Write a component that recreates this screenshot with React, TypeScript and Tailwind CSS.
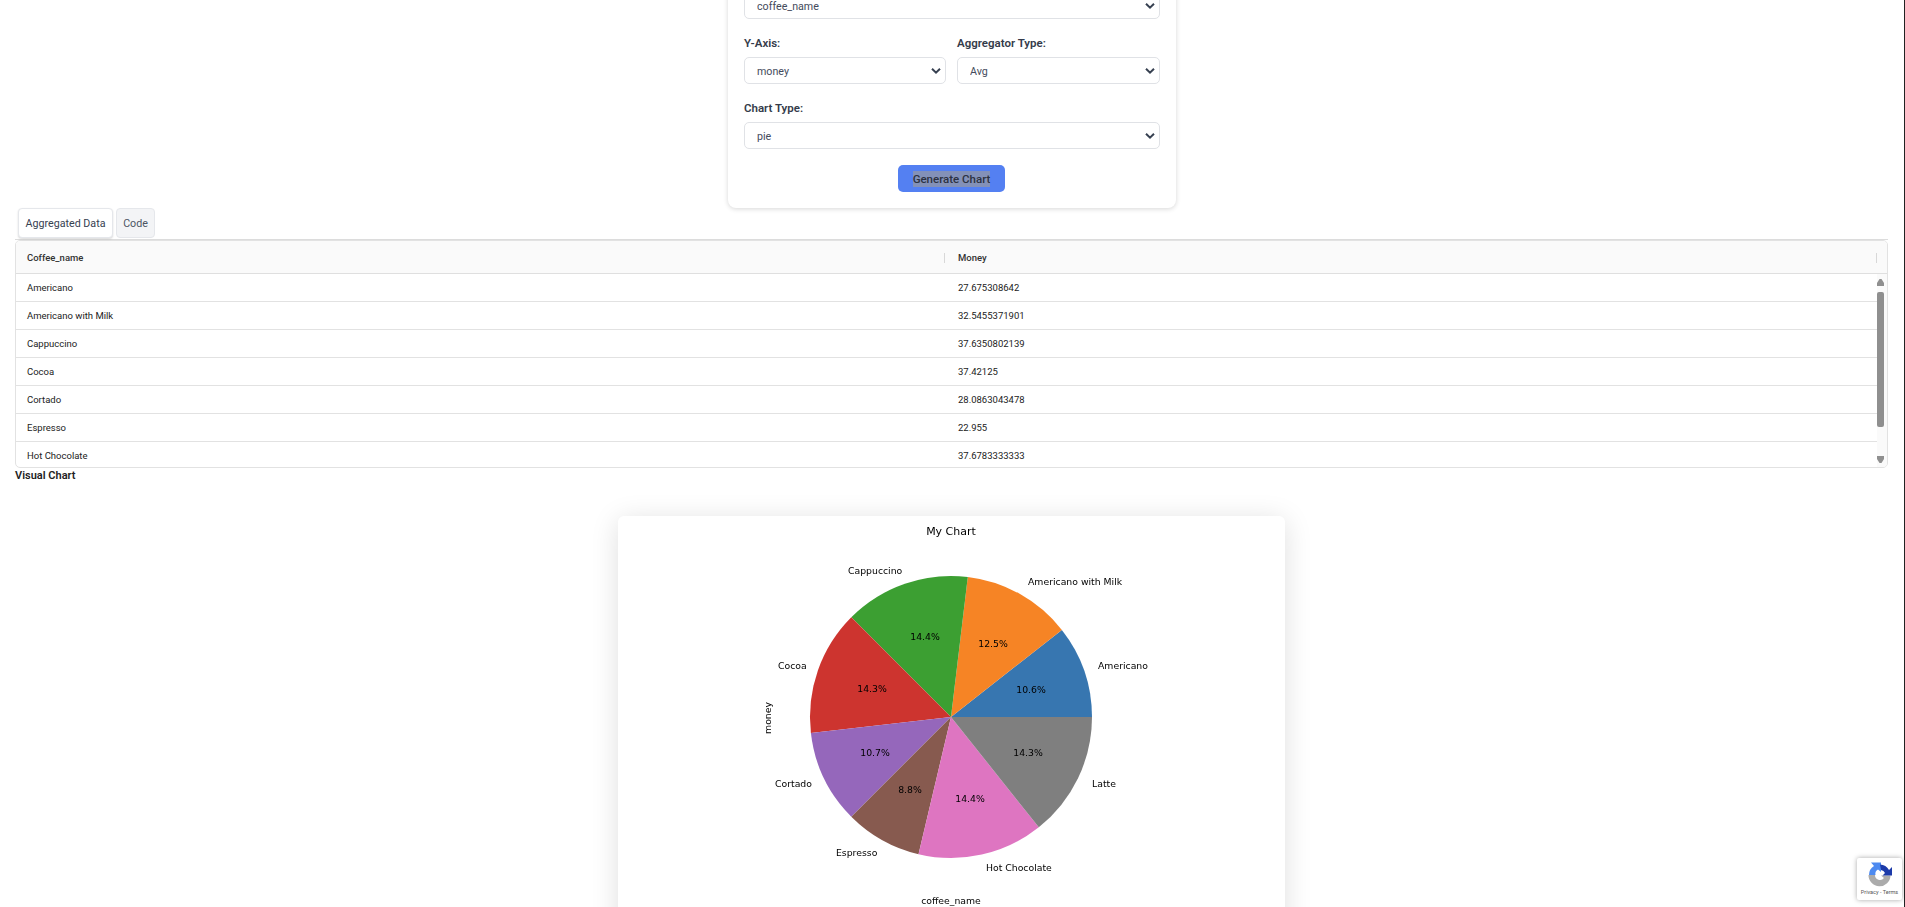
import React from "react";

const font = "font-['Roboto','Noto_Sans',sans-serif]";

function Chevron() {
  return (
    <svg
      className="absolute right-[5px] top-1/2 -translate-y-1/2 pointer-events-none"
      width="10"
      height="7"
      viewBox="0 0 10 7"
      fill="none"
    >
      <path d="M1 1.2 L5 5.2 L9 1.2" stroke="#374151" strokeWidth="2" />
    </svg>
  );
}

function Select({ value }: { value: string }) {
  return (
    <div className="relative w-full">
      <select
        defaultValue={value}
        className="block appearance-none w-full h-[27px] pl-[12px] pt-[3px] bg-white border border-[#e0e2e6] rounded-[5px] text-[10.7px] text-[#444b5c] outline-none"
      >
        <option>{value}</option>
      </select>
      <Chevron />
    </div>
  );
}

function Label({ children }: { children: React.ReactNode }) {
  return <div className="h-4 leading-4 mb-[6px] text-[11.5px] font-semibold text-[#343b4a] whitespace-nowrap">{children}</div>;
}

const rows: [string, string][] = [
  ["Americano", "27.675308642"],
  ["Americano with Milk", "32.5455371901"],
  ["Cappuccino", "37.6350802139"],
  ["Cocoa", "37.42125"],
  ["Cortado", "28.0863043478"],
  ["Espresso", "22.955"],
  ["Hot Chocolate", "37.6783333333"],
];

const slices = [
  { pct: 10.6, color: "#3776b0" },
  { pct: 12.5, color: "#f68425" },
  { pct: 14.4, color: "#3c9f32" },
  { pct: 14.3, color: "#cd342f" },
  { pct: 10.7, color: "#9567bb" },
  { pct: 8.8, color: "#875a4f" },
  { pct: 14.4, color: "#de75c1" },
  { pct: 14.3, color: "#7f7f7f" },
];

const cx = 333;
const cy = 201;
const r = 141;

function slicePaths() {
  let a = 0;
  return slices.map((s) => {
    const start = a;
    a += (s.pct / 100) * Math.PI * 2;
    const x1 = cx + r * Math.cos(start);
    const y1 = cy - r * Math.sin(start);
    const x2 = cx + r * Math.cos(a);
    const y2 = cy - r * Math.sin(a);
    return { d: `M${cx} ${cy} L${x1} ${y1} A${r} ${r} 0 0 0 ${x2} ${y2} Z`, color: s.color };
  });
}

const labels: [string, number, number][] = [
  ["Americano", 480, 149],
  ["Americano with Milk", 410, 65],
  ["Cappuccino", 230, 54],
  ["Cocoa", 160, 149],
  ["Cortado", 157, 267],
  ["Espresso", 218, 336],
  ["Hot Chocolate", 368, 351],
  ["Latte", 474, 267],
];

const pcts: [string, number, number][] = [
  ["10.6%", 413, 173],
  ["12.5%", 375, 127],
  ["14.4%", 307, 120],
  ["14.3%", 254, 172],
  ["10.7%", 257, 236],
  ["8.8%", 292, 273],
  ["14.4%", 352, 282],
  ["14.3%", 410, 236],
];

function PieChart() {
  const dejavu = "'DejaVu Sans', sans-serif";
  return (
    <svg width="667" height="480" viewBox="0 0 667 480" className="block blur-[0.3px]" fontFamily={dejavu} fill="#000">
      <text x="333" y="19" fontSize="11" textAnchor="middle">My Chart</text>
      {slicePaths().map((p, i) => (
        <path key={i} d={p.d} fill={p.color} />
      ))}
      {labels.map(([t, x, y]) => (
        <text key={t} x={x} y={y} fontSize="9.3" dominantBaseline="central">{t}</text>
      ))}
      {pcts.map(([t, x, y], i) => (
        <text key={i} x={x} y={y} fontSize="9.3" textAnchor="middle" dominantBaseline="central">{t}</text>
      ))}
      <text x="0" y="0" fontSize="9.3" textAnchor="middle" dominantBaseline="central" transform="translate(149 202) rotate(-90)">money</text>
      <text x="333" y="384" fontSize="9.3" textAnchor="middle" dominantBaseline="central">coffee_name</text>
    </svg>
  );
}

function Recaptcha() {
  return (
    <div className="absolute right-[2px] top-[858px] w-[45px] h-[42px] bg-white rounded-[2px] shadow-[0_0_5px_rgba(0,0,0,0.35)] flex flex-col items-center pt-[3px]">
      <svg width="27" height="27" viewBox="0 0 27 27" className="blur-[0.3px]">
        <path d="M2.5 14 L9 14 A5 5 0 0 0 18 17 L15 14.5 L24.5 14.5 A11 11 0 0 1 2.5 14 Z" fill="#ababab" />
        <path d="M3 14 A10.5 10.5 0 0 1 8 5 L5 1.5 L15 1.5 L15 11 L12 8.5 A5 5 0 0 0 9.5 14 Z" fill="#4d8af0" />
        <path d="M14 3.5 A10.5 10.5 0 0 1 23 9 L26 6 L26 14.5 L16.5 14.5 L19 12 A5 5 0 0 0 15 9 Z" fill="#1c3aa9" />
      </svg>
      <div className="text-[5.5px] leading-[8px] text-[#555] whitespace-nowrap">Privacy - Terms</div>
    </div>
  );
}

export default function App() {
  return (
    <div className={`relative h-[907px] overflow-hidden bg-white border-r border-[#222] ${font}`}>
      <div className="-mt-[24px] ml-[728px] w-[448px] bg-white rounded-[8px] shadow-[0_1px_5px_rgba(0,0,0,0.16)] px-4 pt-4 pb-4">
        <Select value="coffee_name" />
        <div className="flex gap-[11px] mt-4">
          <div className="w-[202px]">
            <Label>Y-Axis:</Label>
            <Select value="money" />
          </div>
          <div className="w-[203px]">
            <Label>Aggregator Type:</Label>
            <Select value="Avg" />
          </div>
        </div>
        <div className="mt-4">
          <Label>Chart Type:</Label>
          <Select value="pie" />
        </div>
        <div className="flex justify-center mt-4">
          <button className="-ml-px w-[107px] h-[27px] bg-[#5480f2] rounded-[5px] flex items-center justify-center text-[11.5px] font-medium text-[#2c3242]">
            <span className="bg-[#8391b8] leading-4">Generate Chart</span>
          </button>
        </div>
      </div>

      <div className="flex gap-[3px] ml-[18px] text-[10.7px] h-[31px]">
        <div className="w-[95px] h-[30px] pt-[3px] flex items-center justify-center bg-white border border-[#e5e7eb] rounded-[4px] shadow-[0_1px_2px_rgba(0,0,0,0.15)] text-[#374151]">Aggregated Data</div>
        <div className="w-[39px] h-[30px] pt-[3px] flex items-center justify-center bg-[#f3f4f6] border border-[#e5e7eb] rounded-[4px] text-[#4b5563]">Code</div>
      </div>

      <div className="ml-[15px] w-[1873px] border-t border-[#dcdcdc]">
        <div className="h-[228px] border border-[#e2e2e2] rounded-[5px] overflow-hidden text-[9.5px] text-[#222]">
          <div className="grid grid-cols-[931px_931px] h-[33px] pt-[2px] bg-[#fafafa] border-b border-[#dfdfdf] font-medium text-[#333]">
            <div className="flex items-center pl-[11px] relative">
              Coffee_name
              <span className="absolute right-[2px] top-[10px] w-px h-[10px] bg-[#d8d8d8]" />
            </div>
            <div className="flex items-center pl-[11px] relative">
              Money
              <span className="absolute right-[1px] top-[10px] w-px h-[10px] bg-[#d8d8d8]" />
            </div>
          </div>
          <div className="flex h-[194px]">
            <div className="w-[1861px] overflow-hidden">
              {rows.map(([n, m]) => (
                <div key={n} className="grid grid-cols-[931px_930px] h-[28px] pt-px items-center border-b border-[#e2e2e2]">
                  <div className="pl-[11px]">{n}</div>
                  <div className="pl-[11px]">{m}</div>
                </div>
              ))}
            </div>
            <div className="w-[10px] bg-[#fafafa] flex flex-col pt-[5px]">
              <svg width="7" height="7" viewBox="0 0 7 7"><path d="M0 7 L0 4 L2.5 0 L4.5 0 L7 4 L7 7 Z" fill="#8f8f8f" /></svg>
              <div className="w-[7px] h-[135px] mt-[6px] bg-[#8f8f8f] rounded-[2px]" />
              <svg width="7" height="7" viewBox="0 0 7 7" className="mt-[29px]"><path d="M0 0 L0 3 L2.5 7 L4.5 7 L7 3 L7 0 Z" fill="#8f8f8f" /></svg>
            </div>
          </div>
        </div>
      </div>

      <div className="ml-[15px] h-4 leading-4 text-[11px] font-semibold text-[#222]">Visual Chart</div>

      <div className="ml-[618px] mt-[32px] w-[667px] bg-white rounded-[6px] shadow-[0_4px_28px_rgba(0,0,0,0.13)]">
        <PieChart />
      </div>

      <Recaptcha />
    </div>
  );
}
